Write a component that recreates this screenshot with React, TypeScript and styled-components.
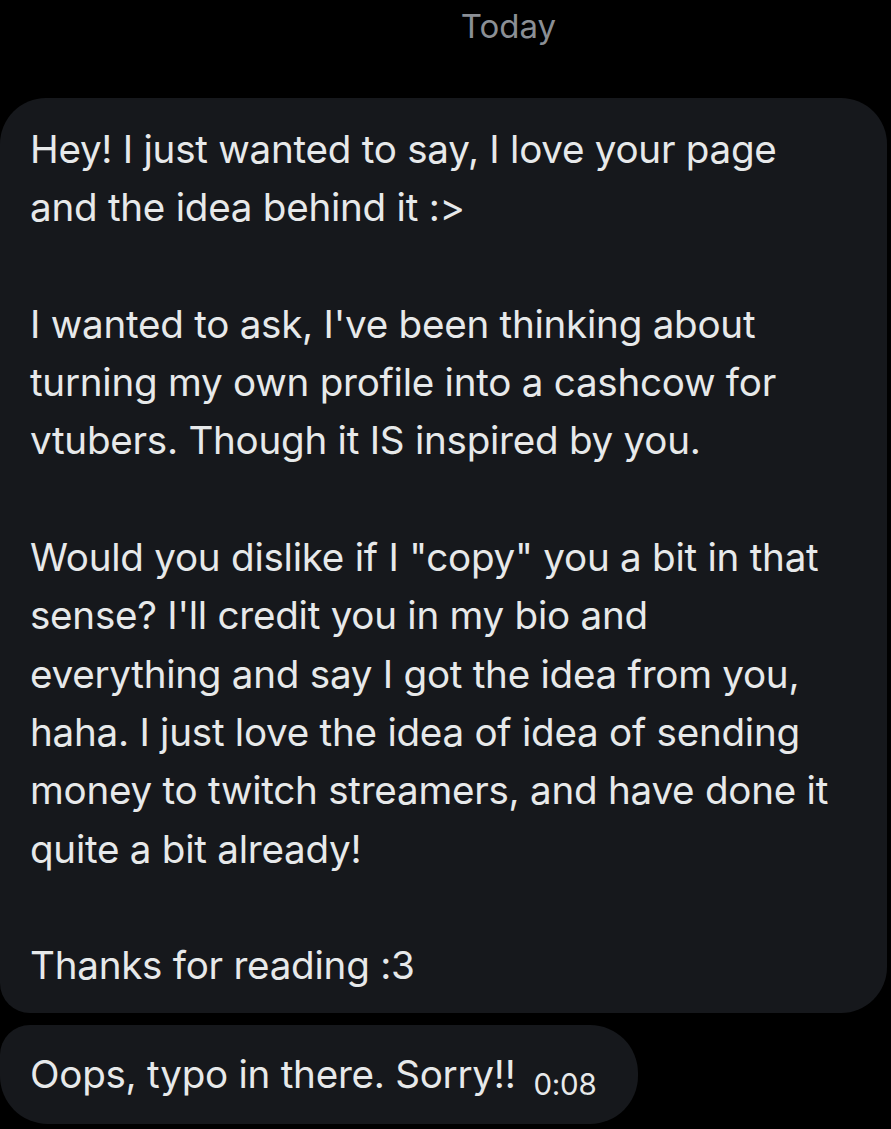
import React from "react";
import styled, { createGlobalStyle } from "styled-components";

const Global = createGlobalStyle`
  html, body { margin: 0; padding: 0; background: #000; }
  body { font-family: "Inter", "Noto Sans", sans-serif; -webkit-font-smoothing: antialiased; }
`;

const Page = styled.div`
  width: 891px;
  height: 1129px;
  background: #000;
  overflow: hidden;
  display: flex;
  flex-direction: column;
`;

const DayLabel = styled.div`
  height: 52px;
  padding-left: 126px;
  display: flex;
  justify-content: center;
  align-items: center;
  color: #8b8f95;
  font-size: 33px;
  line-height: 52px;
`;

const Thread = styled.div`
  margin-top: 46px;
  display: flex;
  flex-direction: column;
  align-items: flex-start;
  gap: 12px;
`;

const Bubble = styled.div<{ $width?: number; $first?: boolean }>`
  background: #16181c;
  color: #e7e9ea;
  width: ${(p) => (p.$width ? `${p.$width}px` : "auto")};
  box-sizing: border-box;
  padding: ${(p) => (p.$first ? "22px 30px 19px 30px" : "20px 30px 17px 30px")};
  border-radius: ${(p) => (p.$first ? "46px 46px 46px 30px" : "30px 48px 48px 48px")};
  font-size: 38.6px;
  line-height: 58.3px;
  letter-spacing: -0.25px;
  white-space: nowrap;
`;

const Para = styled.p`
  margin: 0;
  & + & { margin-top: 58.3px; }
`;

const Time = styled.span`
  font-size: 29.5px;
  color: #e7e9ea;
  margin-left: 18px;
  position: relative;
  top: 7px;
`;

export default function App() {
  return (
    <Page>
      <Global />
      <DayLabel>Today</DayLabel>
      <Thread>
        <Bubble $first $width={887}>
          <Para>
            Hey! I just wanted to say, I love your page
            <br />
            and the idea behind it :&gt;
          </Para>
          <Para>
            I wanted to ask, I've been thinking about
            <br />
            turning my own profile into a cashcow for
            <br />
            vtubers. Though it IS inspired by you.
          </Para>
          <Para>
            Would you dislike if I "copy" you a bit in that
            <br />
            sense? I'll credit you in my bio and
            <br />
            everything and say I got the idea from you,
            <br />
            haha. I just love the idea of idea of sending
            <br />
            money to twitch streamers, and have done it
            <br />
            quite a bit already!
          </Para>
          <Para>Thanks for reading :3</Para>
        </Bubble>
        <Bubble $width={638}>
          Oops, typo in there. Sorry!!<Time>0:08</Time>
        </Bubble>
      </Thread>
    </Page>
  );
}
